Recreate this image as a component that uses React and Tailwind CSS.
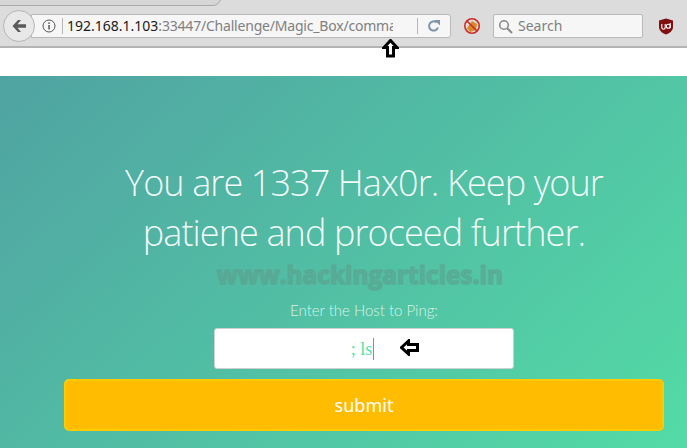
import React from "react";

const ui = { fontFamily: '"Noto Sans", "Open Sans", sans-serif' };
const light = { fontFamily: 'Lato, "Open Sans", sans-serif' };
const heading = { fontFamily: '"Open Sans", Lato, sans-serif' };

function UpArrow() {
  return (
    <svg width="17" height="19" viewBox="0 0 17 19" className="absolute left-[382px] top-[39px]">
      <path d="M8.5 1.5 L15 8.5 H11.5 V17 H5.5 V8.5 H2 Z" fill="#fff" stroke="#000" strokeWidth="3" strokeLinejoin="miter" />
    </svg>
  );
}

function LeftArrow() {
  return (
    <svg width="20" height="17" viewBox="0 0 20 17" className="absolute left-[400px] top-[339px]">
      <path d="M1.5 8.5 L8.5 2 V5.5 H17.5 V11.5 H8.5 V15 Z" fill="#fff" stroke="#000" strokeWidth="3" />
    </svg>
  );
}

export default function App() {
  return (
    <div className="relative w-[687px] h-[448px] overflow-hidden bg-white" style={ui}>
      {/* browser chrome */}
      <div className="relative h-[48px] bg-[#dcdcdc] border-b-2 border-[#b4b4b4]">
        <div className="absolute left-[-8px] top-[-10px] w-[229px] h-[16px] rounded-b-[8px] border border-[#a9a9a9] bg-[#d6d6d6]" />
        <div className="flex items-center h-full pt-[6px]">
          <div className="relative z-10 ml-[3px] w-[32px] h-[32px] rounded-full border border-[#b5b5b5] bg-[#e8e8e8] flex items-center justify-center shrink-0">
            <svg width="16" height="14" viewBox="0 0 16 14">
              <path d="M7 1 L1.5 7 L7 13 H10 L6.5 8.8 H15 V5.2 H6.5 L10 1 Z" fill="#5a5a5a" />
            </svg>
          </div>
          <div className="flex items-center ml-[-4px] w-[420px] h-[24px] bg-[#f6f6f6] border border-[#b9b9b9] rounded-r-[3px] pl-[10px] shrink-0">
            <svg width="14" height="14" viewBox="0 0 14 14" className="shrink-0">
              <circle cx="7" cy="7" r="6" fill="none" stroke="#555" strokeWidth="1" />
              <rect x="6.3" y="6" width="1.5" height="4.5" fill="#555" />
              <rect x="6.3" y="3.4" width="1.5" height="1.5" fill="#555" />
            </svg>
            <div className="w-px h-[16px] bg-[#b5b5b5] ml-[6px] mr-[4px] shrink-0" />
            <div className="w-[326px] overflow-hidden whitespace-nowrap text-[14px] leading-[20px] text-[#808080]">
              <span className="text-[#1a1a1a]">192.168.1.103</span>
              <span className="tracking-[-0.2px]">:33447/Challenge/Magic_Box/command</span>
            </div>
            <div className="w-px h-[16px] bg-[#b5b5b5] ml-[24px] shrink-0" />
            <svg width="14" height="14" viewBox="0 0 14 14" className="ml-[9px] shrink-0">
              <path d="M11 8.5 A4.6 4.6 0 1 1 9.6 3.4" fill="none" stroke="#7e92a8" strokeWidth="2" />
              <path d="M7.5 1 H13 V6.5 Z" fill="#7e92a8" />
            </svg>
          </div>
          <svg width="18" height="18" viewBox="0 0 18 18" className="ml-[12px] shrink-0">
            <path d="M4 11 L9 4 L14 7 L13 13 L7 15 Z" fill="#d98a25" />
            <circle cx="9" cy="9" r="7.2" fill="none" stroke="#cf2a2a" strokeWidth="1.6" />
            <path d="M4 4 L14 14" stroke="#cf2a2a" strokeWidth="1.6" />
          </svg>
          <div className="flex items-center ml-[12px] w-[150px] h-[24px] bg-[#f6f6f6] border border-[#b9b9b9] rounded-[2px] pl-[4px] shrink-0">
            <svg width="15" height="15" viewBox="0 0 15 15" className="shrink-0">
              <circle cx="6" cy="6" r="4.3" fill="none" stroke="#8a8a8a" strokeWidth="1.6" />
              <path d="M9.2 9.2 L14 14" stroke="#8a8a8a" strokeWidth="2" />
            </svg>
            <span className="ml-[5px] text-[14px] leading-[20px] text-[#808080]">Search</span>
          </div>
          <svg width="16" height="17" viewBox="0 0 16 17" className="ml-[15px] shrink-0">
            <path d="M8 0.5 L15 2.5 V9 C15 13 11 15.5 8 16.5 C5 15.5 1 13 1 9 V2.5 Z" fill="#800f10" />
            <path d="M3.8 6 V9.5 A1.7 1.7 0 0 0 7.2 9.5 V6" fill="none" stroke="#fff" strokeWidth="1.1" />
            <circle cx="10.3" cy="8.3" r="2" fill="none" stroke="#fff" strokeWidth="1.1" />
            <path d="M12.2 5 V10" stroke="#fff" strokeWidth="1.1" />
          </svg>
        </div>
      </div>

      <div className="h-[28px] bg-white" />

      {/* page: the screenshot crops the right of a 728px wide page */}
      <div className="w-[687px] h-[372px] overflow-hidden bg-[linear-gradient(137deg,#50a3a2_0%,#53dba6_100%)]">
        <div className="w-[728px] flex flex-col items-center">
          <h1 className="mt-[82px] w-[520px] h-[100px] text-center text-[36px] tracking-[-0.9px] leading-[50px] font-light text-white/95" style={heading}>
            You are 1337 Hax0r. Keep your patiene and proceed further.
          </h1>
          <p className="mt-[42px] text-[15px] leading-[20px] font-light text-[#ffffffcc]" style={light}>
            Enter the Host to Ping:
          </p>
          <div className="mt-[8px] w-[300px] h-[41px] bg-white border border-[#d0d0d0] rounded-[3px] flex items-center justify-center shrink-0">
            <span className="-ml-[3px] text-[18px] leading-[22px] text-[#53e3a6] border-r border-[#53a88e] pr-px" style={{ fontFamily: '"Liberation Serif", serif' }}>
              ; ls
            </span>
          </div>
          <button className="mt-[10px] w-[600px] h-[52px] bg-[#ffbc00] border-2 border-[#ffcb00] rounded-[5px] text-white text-[18px]" style={ui}>
            submit
          </button>
        </div>
      </div>

      {/* overlays */}
      <UpArrow />
      <LeftArrow />
      <div
        className="absolute left-[217px] top-[259px] text-[24.4px] leading-[32px] font-bold whitespace-nowrap text-[#5ba592]/60"
        style={{ fontFamily: '"Open Sans", sans-serif', WebkitTextStroke: "2px rgba(92,160,140,0.45)" }}
      >
        www.hackingarticles.in
      </div>
    </div>
  );
}
